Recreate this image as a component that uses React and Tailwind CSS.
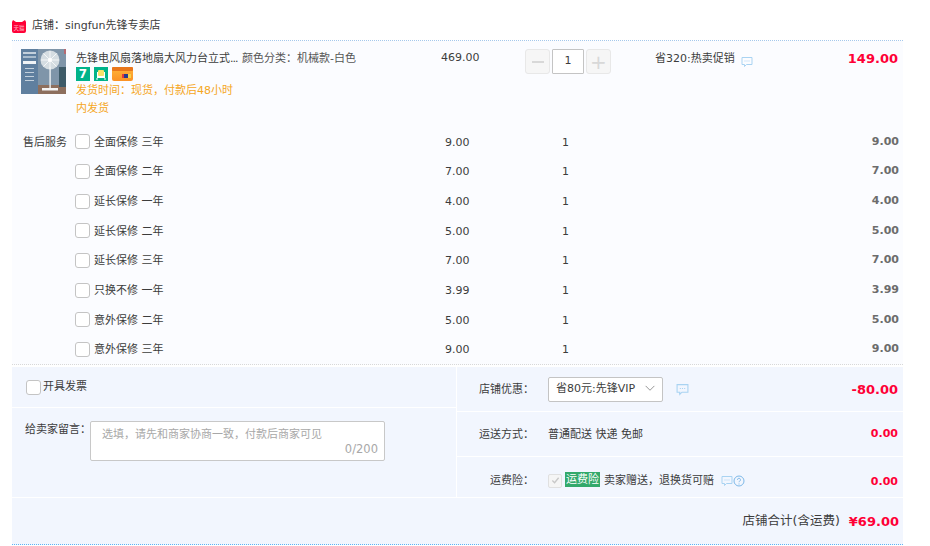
import React from "react";

const font = "font-['DejaVu_Sans','Noto_Sans_CJK_SC',sans-serif]";

const services = [
  { name: "全面保修 三年", price: "9.00" },
  { name: "全面保修 二年", price: "7.00" },
  { name: "延长保修 一年", price: "4.00" },
  { name: "延长保修 二年", price: "5.00" },
  { name: "延长保修 三年", price: "7.00" },
  { name: "只换不修 一年", price: "3.99" },
  { name: "意外保修 二年", price: "5.00" },
  { name: "意外保修 三年", price: "9.00" },
];

const Bubble = ({ className }) => (
  <svg viewBox="0 0 12 12" className={className} fill="none" stroke="#a9d3f2" strokeWidth="1">
    <path d="M1 1.5h10v7H5.5L3.5 10.5V8.5H1z" />
    <path d="M3.5 5h1M5.5 5h1M7.5 5h1" />
  </svg>
);

const Check = () => (
  <span className="w-[15px] h-[15px] border border-[#c4c4c4] rounded-[3px] bg-white shrink-0" />
);

const Fan = () => (
  <svg viewBox="0 0 45 45" className="w-[45px] h-[45px] shrink-0">
    <rect width="45" height="45" fill="#5f7f9f" />
    <rect x="17" y="0" width="28" height="45" fill="#7f95a9" />
    <rect x="17" y="36" width="28" height="9" fill="#8d6f5e" />
    <rect x="38" y="18" width="7" height="20" fill="#3d5a68" />
    <circle cx="29" cy="11" r="9.5" fill="#d5dde2" />
    <path d="M29 2v18M20 11h18M22.5 4.5l13 13M35.5 4.5l-13 13" stroke="#f4f6f7" strokeWidth="1" />
    <circle cx="29" cy="11" r="2" fill="#fff" />
    <rect x="28.4" y="18" width="1.4" height="22" fill="#eef2f4" />
    <rect x="21" y="39" width="16" height="2.5" fill="#f4f4f4" />
    <rect x="43" y="0" width="2" height="5" fill="#b56a72" />
    <rect x="2" y="3" width="13" height="2" fill="#c3d0dc" />
    <rect x="2" y="7" width="13" height="2" fill="#a9bccd" />
    <rect x="2" y="12" width="13" height="3" fill="#f0f3f6" />
    <rect x="4" y="19" width="9" height="1" fill="#c3d0dc" />
    <rect x="4" y="23" width="9" height="1" fill="#c3d0dc" />
    <rect x="4" y="27" width="9" height="1" fill="#c3d0dc" />
    <rect x="4" y="31" width="9" height="1" fill="#c3d0dc" />
  </svg>
);

const Row = ({ s, first }) => (
  <div className="flex items-center h-[29.7px]">
    <span className="w-[63px] pl-[11px] pt-[2px] shrink-0">{first ? "售后服务" : ""}</span>
    <Check />
    <span className="ml-[4px] pt-[2px] w-[351px] shrink-0">{s.name}</span>
    <span className="w-[120px] pt-[2px] shrink-0">{s.price}</span>
    <span className="pt-[2px] -ml-[3px]">1</span>
    <span className="ml-auto pr-[4px] font-bold text-[11px] text-[#6c6c6c]">{s.price}</span>
  </div>
);

export default function App() {
  return (
    <div className={`w-[930px] h-[546px] bg-white overflow-hidden text-[11px] text-[#3c3c3c] ${font}`}>
      <div className="ml-[12px] w-[891px]">
        {/* shop header */}
        <div className="h-[41px] flex items-center pt-[13px] border-b border-dotted border-[#a5c8ec]">
          <svg viewBox="0 0 14 13" className="w-[14px] h-[13px]">
            <path d="M0 2 L1 0 L4 2 H10 L13 0 L14 2 V11 Q14 13 12 13 H2 Q0 13 0 11 Z" fill="#ff0036" />
            <text x="7" y="9.5" textAnchor="middle" fontSize="5.5" fill="#ffb3c4">天猫</text>
          </svg>
          <span className="ml-[6px]">店铺：singfun先锋专卖店</span>
        </div>

        <div className="bg-[#fbfcff] h-[324px] border-b border-dotted border-[#d8d8d8]">
          {/* main item */}
          <div className="flex h-[86px] pt-[8px]">
            <div className="ml-[9px] shrink-0"><Fan /></div>
            <div className="ml-[10px] w-[166px] shrink-0">
              <div className="whitespace-nowrap leading-[18px] pt-[1px] h-[18px]">先锋电风扇落地扇大风力台立式<span className="tracking-[-1px]">...</span></div>
              <div className="flex items-center gap-[4px] h-[14px]">
                <span className="w-[14px] h-[14px] bg-[#00b38a] text-white font-bold text-[12px] leading-[14px] text-center">7</span>
                <svg viewBox="0 0 14 14" className="w-[14px] h-[14px]">
                  <rect width="14" height="14" fill="#00b38a" />
                  <rect x="3" y="5" width="8" height="6" fill="#fff" />
                  <rect x="4" y="3" width="6" height="6" rx="1" fill="#f5e36a" />
                  <path d="M3 11v2M11 11v2" stroke="#fff" strokeWidth="1" />
                </svg>
                <svg viewBox="0 0 21 14" className="w-[21px] h-[14px]">
                  <defs>
                    <linearGradient id="card" x1="0" y1="0" x2="0" y2="1">
                      <stop offset="0" stopColor="#ffb73a" />
                      <stop offset="1" stopColor="#fb9226" />
                    </linearGradient>
                  </defs>
                  <rect width="21" height="14" rx="2" fill="url(#card)" />
                  <rect width="21" height="4" rx="1" fill="#e8761c" />
                  <rect x="10" y="7" width="9" height="4" fill="#2b3a8c" />
                  <rect x="10" y="7" width="2" height="4" fill="#e23b3b" />
                  <rect x="16" y="7" width="3" height="4" fill="#f6d34a" />
                </svg>
              </div>
              <div className="text-[#f5a623] leading-[18px] pt-[1px] w-[161px]">发货时间：现货，付款后48小时内发货</div>
            </div>
            <div className="w-[199px] shrink-0 whitespace-nowrap leading-[18px] pt-[1px] text-[#555]">颜色分类：机械款-白色</div>
            <div className="w-[84px] shrink-0 leading-[18px]">469.00</div>
            <div className="flex items-start shrink-0 w-[130px]">
              <span className="w-[25px] h-[25px] border border-[#e8e8e8] bg-[#f6f6f6] rounded-[3px] flex items-center justify-center">
                <span className="w-[12px] h-[2px] bg-[#d8d8d8]" />
              </span>
              <span className="ml-[2px] w-[32px] h-[25px] border border-[#c4c4c4] bg-white flex items-center justify-center rounded-[1px]">1</span>
              <span className="ml-[2px] w-[25px] h-[25px] border border-[#e8e8e8] bg-[#f6f6f6] rounded-[3px] flex items-center justify-center text-[#d8d8d8] text-[20px] leading-none">+</span>
            </div>
            <div className="flex items-start whitespace-nowrap leading-[18px] pt-[1px]">
              省320:热卖促销
              <Bubble className="w-[12px] h-[12px] ml-[6px] mt-[6px]" />
            </div>
            <div className="ml-auto pr-[5px] font-bold text-[13px] leading-[19px] text-[#ff0036]">149.00</div>
          </div>
          {/* after-sale services */}
          <div>
            {services.map((s, i) => (
              <Row key={s.name} s={s} first={i === 0} />
            ))}
          </div>
        </div>

        {/* order options */}
        <div className="mt-[2px] flex h-[131px] bg-[#f2f6fe] border-b border-white">
          <div className="w-[445px] shrink-0 border-r border-white">
            <div className="h-[41px] flex items-center pl-[14px] pt-[1px] border-b border-white">
              <Check />
              <span className="ml-[2px]">开具发票</span>
            </div>
            <div className="flex pl-[13px] pt-[13px]">
              <span className="w-[65px] shrink-0 leading-[18px] whitespace-nowrap">给卖家留言：</span>
              <div className="w-[295px] h-[40px] border border-[#c8c8c8] rounded-[2px] bg-white px-[11px] pt-[5px] text-[#a8a8a8] relative">
                选填，请先和商家协商一致，付款后商家可见
                <span className="absolute right-[6px] bottom-[2px] text-[11.5px]">0/200</span>
              </div>
            </div>
          </div>
          <div className="flex-1 flex flex-col">
            <div className="h-[45px] flex items-center border-b border-white">
              <span className="w-[91px] pr-[14px] pt-[2px] text-right shrink-0">店铺优惠：</span>
              <span className="w-[115px] h-[25px] border border-[#c4c4c4] bg-white rounded-[2px] flex items-center pl-[7px] pt-[1px] shrink-0 whitespace-nowrap">
                省80元:先锋VIP
                <svg viewBox="0 0 12 8" className="w-[12px] h-[7px] ml-[9px] -mt-[3px]" fill="none" stroke="#888" strokeWidth="1"><path d="M1 1l5 5 5-5" /></svg>
              </span>
              <Bubble className="w-[13px] h-[13px] ml-[13px]" />
              <span className="ml-auto pr-[5px] pt-[1px] font-bold text-[13px] text-[#ff0036]">-80.00</span>
            </div>
            <div className="h-[45px] flex items-center border-b border-white">
              <span className="w-[91px] pr-[14px] pt-[2px] text-right shrink-0">运送方式：</span>
              <span className="pt-[2px]">普通配送 快递 免邮</span>
              <span className="ml-auto pr-[5px] font-bold text-[11px] text-[#ff0036]">0.00</span>
            </div>
            <div className="flex-1 flex items-center pt-[7px]">
              <span className="w-[91px] pr-[14px] pt-[2px] text-right shrink-0">运费险：</span>
              <span className="w-[14px] h-[14px] border border-[#e0e0e0] rounded-[2px] bg-[#f5f5f5] flex items-center justify-center shrink-0">
                <svg viewBox="0 0 10 10" className="w-[9px] h-[9px]" fill="none" stroke="#c8c8c8" strokeWidth="1.5"><path d="M1.5 5l2.5 2.5L8.5 2" /></svg>
              </span>
              <span className="ml-[3px] bg-[#33a96b] text-white leading-[15px] -mt-[3px] px-[1px]">运费险</span>
              <span className="ml-[4px] pt-[2px] whitespace-nowrap">卖家赠送，退换货可赔</span>
              <Bubble className="w-[12px] h-[12px] ml-[7px]" />
              <svg viewBox="0 0 12 12" className="w-[12px] h-[12px]" fill="none" stroke="#7db8e8" strokeWidth="1"><circle cx="6" cy="6" r="5" /><path d="M4.5 4.8a1.5 1.5 0 1 1 2.2 1.3c-.5.3-.7.6-.7 1.1M6 8.5v1" /></svg>
              <span className="ml-auto pr-[5px] pt-[3px] font-bold text-[11px] text-[#ff0036]">0.00</span>
            </div>
          </div>
        </div>

        {/* shop total */}
        <div className="h-[47px] bg-[#f2f6fe] flex items-center justify-end pr-[4px] pt-[1px] border-b border-dotted border-[#5eb4f5]">
          <span className="text-[12.5px]">店铺合计(含运费)</span>
          <span className="ml-[9px] font-bold text-[13px] text-[#ff0036]">¥69.00</span>
        </div>
      </div>
    </div>
  );
}
